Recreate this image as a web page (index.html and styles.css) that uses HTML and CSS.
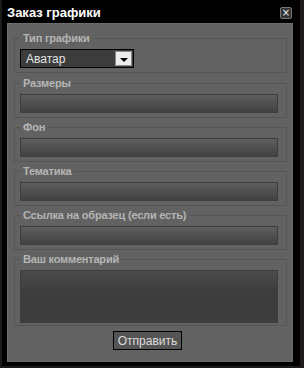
FILE: index.html
```html
<!DOCTYPE html>
<html>

<head>
    <title>Заказ графики</title>
    <meta name="viewport" content="width=device-width, initial-scale=1">
    <link rel="stylesheet" href="styles.css">
</head>

<body>
    <div class="dialog">
        <div class="titlebar">
            <span class="title">Заказ графики</span>
            <button class="close" type="button">&times;</button>
        </div>
        <form class="panel">
            <fieldset class="group group-first">
                <legend>Тип графики</legend>
                <div class="select">
                    <span class="select-value">Аватар</span>
                    <span class="select-btn"><span class="arrow"></span></span>
                </div>
            </fieldset>
            <fieldset class="group">
                <legend>Размеры</legend>
                <input class="field" type="text">
            </fieldset>
            <fieldset class="group">
                <legend>Фон</legend>
                <input class="field" type="text">
            </fieldset>
            <fieldset class="group">
                <legend>Тематика</legend>
                <input class="field" type="text">
            </fieldset>
            <fieldset class="group">
                <legend>Ссылка на образец (если есть)</legend>
                <input class="field" type="text">
            </fieldset>
            <fieldset class="group group-last">
                <legend>Ваш комментарий</legend>
                <textarea class="field comment"></textarea>
            </fieldset>
            <div class="actions">
                <button class="submit" type="button">Отправить</button>
            </div>
        </form>
    </div>
</body>

</html>
```

FILE: styles.css
```css
body {
    margin: 0;
    padding: 0;
    background-color: #1e1a1a;
    font-family: "Liberation Sans", Arial, sans-serif;
}

.dialog {
    width: 298px;
    height: 366px;
    margin-left: 2px;
    background-color: #000;
    box-sizing: border-box;
    padding: 0 7px 0 5px;
}

.titlebar {
    display: flex;
    align-items: center;
    justify-content: space-between;
    height: 23px;
}

.title {
    color: #fff;
    font-weight: bold;
    font-size: 13px;
    margin-top: 2px;
}

.close {
    display: flex;
    align-items: center;
    justify-content: center;
    width: 12px;
    height: 12px;
    padding: 0;
    margin-top: 2px;
    margin-right: 1px;
    border: 1px solid #777;
    border-radius: 2px;
    background-color: #333;
    color: #eee;
    font-size: 10px;
    line-height: 10px;
    font-family: "DejaVu Sans", sans-serif;
    cursor: pointer;
}

.panel {
    height: 339px;
    box-sizing: border-box;
    margin: 0;
    padding: 8px 5px 0 6px;
    background-color: #626262;
    border: 1px solid #6c6c6c;
}

.group {
    margin: 0 0 3px 0;
    padding: 5px 8px 4px 5px;
    border: 1px solid #555;
    min-width: 0;
}

.group-first {
    margin-bottom: 4px;
}

.group-last {
    padding-bottom: 2px;
    margin-bottom: 5px;
}

.group legend {
    padding: 0 3px;
    color: #b5b5b5;
    font-weight: bold;
    font-size: 11px;
    line-height: 12px;
    letter-spacing: -0.2px;
}

.select {
    display: flex;
    align-items: center;
    justify-content: space-between;
    width: 114px;
    height: 19px;
    box-sizing: border-box;
    border: 1px solid #000;
    background-color: #3c3c3c;
}

.select-value {
    color: #e2e2e2;
    font-size: 12px;
    padding-left: 5px;
}

.select-btn {
    display: flex;
    align-items: center;
    justify-content: center;
    width: 17px;
    height: 15px;
    margin-right: 1px;
    box-sizing: border-box;
    border: 1px solid #8a8a8a;
    background-color: #ececec;
}

.arrow {
    width: 0;
    height: 0;
    margin-top: 3px;
    border-left: 4px solid transparent;
    border-right: 4px solid transparent;
    border-top: 4px solid #000;
}

.field {
    display: block;
    width: 258px;
    height: 19px;
    box-sizing: border-box;
    margin: 0;
    border: 1px solid #3e3e3e;
    background: linear-gradient(#5e5e5e, #424242);
    color: #ddd;
    outline: none;
}

.comment {
    height: 53px;
    resize: none;
    background: linear-gradient(#4c4c4c, #3d3d3d 40%);
}

.actions {
    display: flex;
    justify-content: center;
    padding-right: 6px;
}

.submit {
    height: 19px;
    padding: 0 4px;
    border: 1px solid #000;
    background-color: #555;
    color: #dcdcdc;
    font-family: "Liberation Sans", Arial, sans-serif;
    font-size: 12px;
    cursor: pointer;
}
```
